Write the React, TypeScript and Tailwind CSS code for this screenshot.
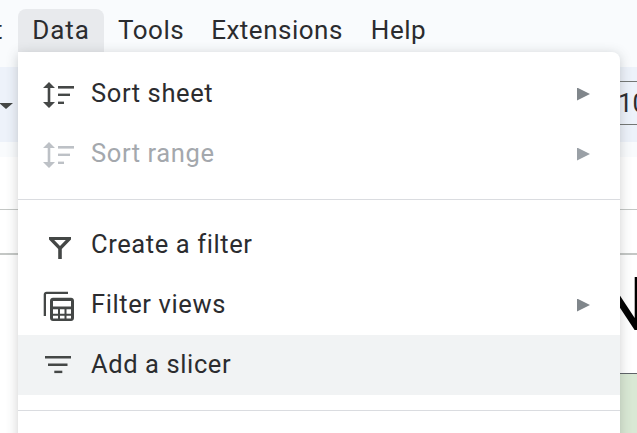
import { ReactNode } from "react";

const font = { fontFamily: "Roboto, sans-serif" };

function SortIcon() {
  return (
    <svg width="32" height="32" viewBox="0 0 32 32" fill="currentColor">
      <path d="M6 4 12 10H7.300V24H12L6 30 0 24H4.700V10H0z" />
      <rect x="15" y="8" width="16" height="2.600" />
      <rect x="15" y="15.600" width="12" height="2.400" />
      <rect x="15" y="23.600" width="6" height="2.400" />
    </svg>
  );
}

function FilterIcon() {
  return (
    <svg width="32" height="32" viewBox="0 0 32 32" fill="currentColor">
      <path
        fillRule="evenodd"
        d="M6 8h22v2.600L18.800 20V30h-3.600V20L6 10.600zM11.200 11l5.800 6 5.800-6z"
      />
    </svg>
  );
}

function ViewsIcon() {
  return (
    <svg width="32" height="32" viewBox="0 0 32 32" fill="currentColor">
      <path d="M.7 5.500C.7 3.800 1.900 2.700 3.500 2.700H25V5H3.500C3.200 5 3 5.200 3 5.500V27H.7z" />
      <path
        fillRule="evenodd"
        d="M10 8.700H28C29.700 8.700 31 10 31 11.700V29C31 30.700 29.700 32 28 32H10C8.300 32 7 30.700 7 29V11.700C7 10 8.300 8.700 10 8.700zM10 12v5.500H28V12zM10 20.300v4.500h5v-4.500zM17 20.300v4.500h4.500v-4.500zM23.500 20.300v4.500h4.500v-4.500zM10 26.800v2.700h5v-2.700zM17 26.800v2.700h4.500v-2.700zM23.500 26.800v2.700h4.500v-2.700z"
      />
    </svg>
  );
}

function SlicerIcon() {
  return (
    <svg width="32" height="32" viewBox="0 0 32 32" fill="currentColor">
      <rect x="2" y="7" width="26" height="2.500" />
      <rect x="5" y="14.500" width="19.500" height="2.500" />
      <rect x="11.300" y="21.700" width="8" height="2.400" />
    </svg>
  );
}

function Arrow({ muted }: { muted?: boolean }) {
  return (
    <span
      className={`h-[13px] w-[13px] [clip-path:polygon(0_0,100%_50%,0_100%)] ${muted ? "bg-[#9aa0a6]" : "bg-[#80868b]"}`}
    />
  );
}

function MenuRow({
  icon,
  label,
  submenu,
  disabled,
  active,
}: {
  icon: ReactNode;
  label: string;
  submenu?: boolean;
  disabled?: boolean;
  active?: boolean;
}) {
  return (
    <div className={`flex h-[60px] items-center pl-[25px] pr-[30px] ${active ? "bg-[#f1f3f4]" : ""}`}>
      <span className={`flex w-[48px] items-center ${disabled ? "text-[#bdc1c6]" : "text-[#444746]"}`}>{icon}</span>
      <span
        className={`flex-1 text-[25.500px] leading-none tracking-[0.6px] ${disabled ? "text-[#a4a8ad]" : "text-[#2b2c2f]"}`}
      >
        {label}
      </span>
      {submenu ? <Arrow muted={disabled} /> : null}
    </div>
  );
}

export default function App() {
  return (
    <div className="relative h-[433px] w-[637px] overflow-hidden bg-white" style={font}>
      {/* menu bar */}
      <div className="flex h-[67px] items-start bg-[#f9fbfd] pt-[9px] text-[26px] leading-none tracking-[0.5px] text-[#2b2c2f]">
        <span className="flex h-[43px] w-[18px] items-center justify-end overflow-hidden pb-[2px] pr-[15px]">t</span>
        <span className="flex h-[43px] w-[86px] items-center justify-center rounded-t-lg bg-[#e8eaed] pb-[2px] tracking-[0.9px]">
          Data
        </span>
        <span className="flex h-[43px] items-center pb-[2px] pl-[14px]">Tools</span>
        <span className="flex h-[43px] items-center pb-[2px] pl-[27px]">Extensions</span>
        <span className="flex h-[43px] items-center pb-[2px] pl-[28px]">Help</span>
      </div>

      {/* toolbar */}
      <div className="flex h-[75px] items-center justify-between bg-[#edf2fa]">
        <span className="ml-[-1px] mt-[3px] h-[6px] w-[14px] bg-[#444746] [clip-path:polygon(0_0,100%_0,50%_100%)]" />
        <div className="mb-[3px] flex h-[44px] w-[17px] items-center overflow-hidden border-y border-[#747775] text-[26px] leading-none text-[#2b2c2f]">
          <span className="ml-[-2px]">10</span>
        </div>
      </div>

      {/* sheet behind the menu */}
      <div className="h-[15px] bg-[#f9fbfd]" />
      <div className="h-[53px] border-b border-[#c4c7c5]" />
      <div className="h-[45px] border-b-2 border-[#c4c7c5]" />
      <div className="flex h-[178px] justify-end">
        <div className="flex w-[17px] flex-col">
          <div className="flex h-[118px] shrink-0 items-start justify-end overflow-hidden pt-[12px]">
            <span className="mr-[-11px] shrink-0 text-[75px] leading-none text-black">N</span>
          </div>
          <div className="flex-1 border-t border-[#5f6368] bg-[#d9e8d4]" />
        </div>
      </div>

      {/* Data menu */}
      <div className="absolute left-[18px] top-[52px] h-[400px] w-[602px] rounded-tr-lg bg-white pt-[12px] shadow-[0_2px_12px_rgba(60,64,67,0.25)]">
        <MenuRow icon={<SortIcon />} label="Sort sheet" submenu />
        <MenuRow icon={<SortIcon />} label="Sort range" submenu disabled />
        <div className="mb-[15px] mt-[15px] h-px bg-[#dadce0]" />
        <MenuRow icon={<FilterIcon />} label="Create a filter" />
        <MenuRow icon={<ViewsIcon />} label="Filter views" submenu />
        <MenuRow icon={<SlicerIcon />} label="Add a slicer" active />
        <div className="mt-[15px] h-px bg-[#dadce0]" />
      </div>
    </div>
  );
}
